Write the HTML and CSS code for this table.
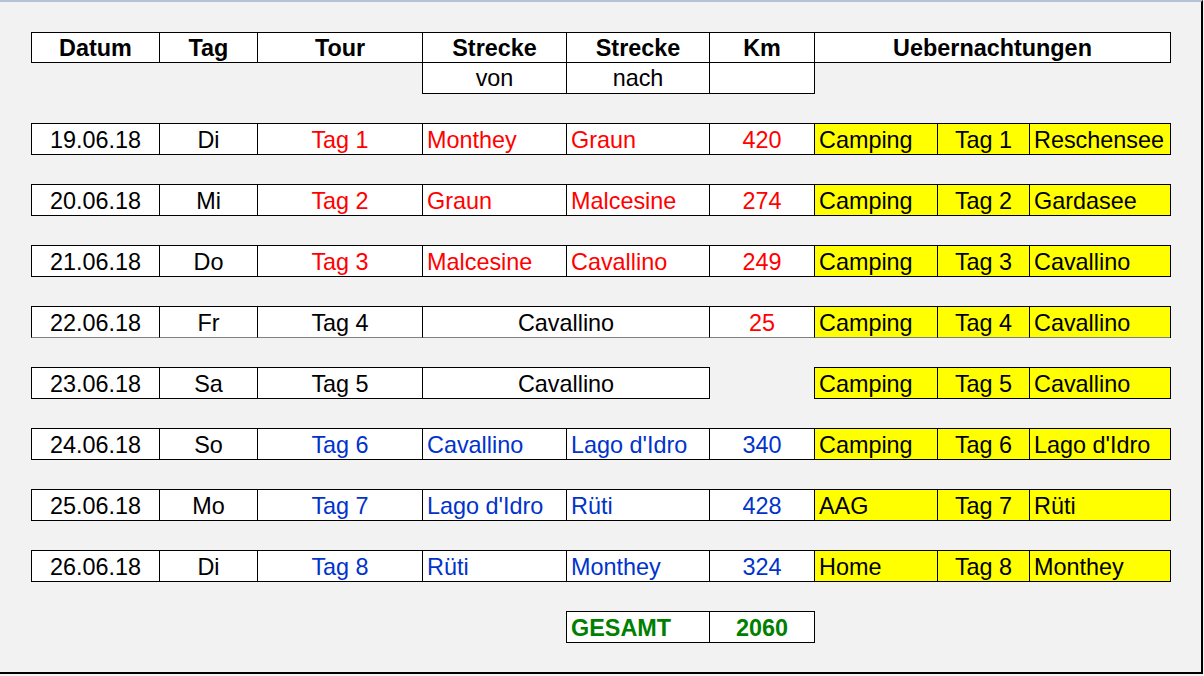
FILE: index.html
```html
<!DOCTYPE html>
<html lang="de">
<head>
<meta charset="utf-8">
<title>Reiseplan</title>
<link rel="stylesheet" href="styles.css">
</head>
<body>
<div class="sheet">
  <div class="plan">
    <div class="head">
      <div class="row head1">
        <div class="c b">Datum</div>
        <div class="c b">Tag</div>
        <div class="c b">Tour</div>
        <div class="c b">Strecke</div>
        <div class="c b">Strecke</div>
        <div class="c b">Km</div>
        <div class="c b s3 end">Uebernachtungen</div>
      </div>
      <div class="row head2">
        <div class="c col4">von</div>
        <div class="c">nach</div>
        <div class="c end"></div>
      </div>
    </div>

    <div class="row">
      <div class="c">19.06.18</div>
      <div class="c">Di</div>
      <div class="c red">Tag 1</div>
      <div class="c l red">Monthey</div>
      <div class="c l red">Graun</div>
      <div class="c red">420</div>
      <div class="c l y">Camping</div>
      <div class="c y">Tag 1</div>
      <div class="c l y end">Reschensee</div>
    </div>

    <div class="row">
      <div class="c">20.06.18</div>
      <div class="c">Mi</div>
      <div class="c red">Tag 2</div>
      <div class="c l red">Graun</div>
      <div class="c l red">Malcesine</div>
      <div class="c red">274</div>
      <div class="c l y">Camping</div>
      <div class="c y">Tag 2</div>
      <div class="c l y end">Gardasee</div>
    </div>

    <div class="row">
      <div class="c">21.06.18</div>
      <div class="c">Do</div>
      <div class="c red">Tag 3</div>
      <div class="c l red">Malcesine</div>
      <div class="c l red">Cavallino</div>
      <div class="c red">249</div>
      <div class="c l y">Camping</div>
      <div class="c y">Tag 3</div>
      <div class="c l y end">Cavallino</div>
    </div>

    <div class="row grey">
      <div class="c">22.06.18</div>
      <div class="c">Fr</div>
      <div class="c">Tag 4</div>
      <div class="c s2">Cavallino</div>
      <div class="c red">25</div>
      <div class="c l y">Camping</div>
      <div class="c y">Tag 4</div>
      <div class="c l y end">Cavallino</div>
    </div>

    <div class="row">
      <div class="c">23.06.18</div>
      <div class="c">Sa</div>
      <div class="c">Tag 5</div>
      <div class="c s2 end">Cavallino</div>
      <div class="c l y col7">Camping</div>
      <div class="c y">Tag 5</div>
      <div class="c l y end">Cavallino</div>
    </div>

    <div class="row">
      <div class="c">24.06.18</div>
      <div class="c">So</div>
      <div class="c blue">Tag 6</div>
      <div class="c l blue">Cavallino</div>
      <div class="c l blue">Lago d'Idro</div>
      <div class="c blue">340</div>
      <div class="c l y">Camping</div>
      <div class="c y">Tag 6</div>
      <div class="c l y end">Lago d'Idro</div>
    </div>

    <div class="row">
      <div class="c">25.06.18</div>
      <div class="c">Mo</div>
      <div class="c blue">Tag 7</div>
      <div class="c l blue">Lago d'Idro</div>
      <div class="c l blue">Rüti</div>
      <div class="c blue">428</div>
      <div class="c l y">AAG</div>
      <div class="c y">Tag 7</div>
      <div class="c l y end">Rüti</div>
    </div>

    <div class="row">
      <div class="c">26.06.18</div>
      <div class="c">Di</div>
      <div class="c blue">Tag 8</div>
      <div class="c l blue">Rüti</div>
      <div class="c l blue">Monthey</div>
      <div class="c blue">324</div>
      <div class="c l y">Home</div>
      <div class="c y">Tag 8</div>
      <div class="c l y end">Monthey</div>
    </div>

    <div class="row">
      <div class="c l b green col5">GESAMT</div>
      <div class="c b green end">2060</div>
    </div>
  </div>
</div>
</body>
</html>
```

FILE: styles.css
```css
html, body {
  margin: 0;
  padding: 0;
  background: #f2f2f2;
}

body {
  font-family: "Liberation Sans", Arial, sans-serif;
  font-size: 23.4px;
  color: #000;
}

.sheet {
  box-sizing: border-box;
  width: 1203px;
  height: 674px;
  border-top: 2px solid #b3c1da;
  border-right: 2px solid #000;
  border-bottom: 2px solid #000;
  background: #f2f2f2;
  padding: 30px 0 0 31px;
}

.plan {
  display: flex;
  flex-direction: column;
  gap: 29px;
}

.row {
  display: grid;
  grid-template-columns: 128px 98px 165px 144px 143px 105px 123px 92px 141px;
  grid-template-rows: 32px;
  height: 32px;
}

.c {
  box-sizing: border-box;
  border-left: 1px solid #000;
  border-top: 1px solid #000;
  border-bottom: 1px solid #000;
  background: #fff;
  text-align: center;
  line-height: 28px;
  padding-top: 2px;
  white-space: nowrap;
  overflow: hidden;
}

.end {
  box-shadow: 1px 0 0 #000;
}

.head1,
.head2 {
  height: 31px;
  grid-template-rows: 31px;
}

.head1 .c {
  line-height: 28px;
  padding-top: 1px;
}

.head2 .c {
  border-top: 0;
  line-height: 30px;
  padding-top: 0;
}

.grey .c {
  border-bottom-color: #7f7f7f;
}

.b { font-weight: bold; }
.l { text-align: left; padding-left: 4px; }
.y { background: #ffff00; }
.red { color: #ff0000; }
.blue { color: #0033cc; }
.green { color: #008000; }

.s2 { grid-column: span 2; }
.s3 { grid-column: span 3; }
.col4 { grid-column-start: 4; }
.col5 { grid-column-start: 5; }
.col7 { grid-column-start: 7; }
```
